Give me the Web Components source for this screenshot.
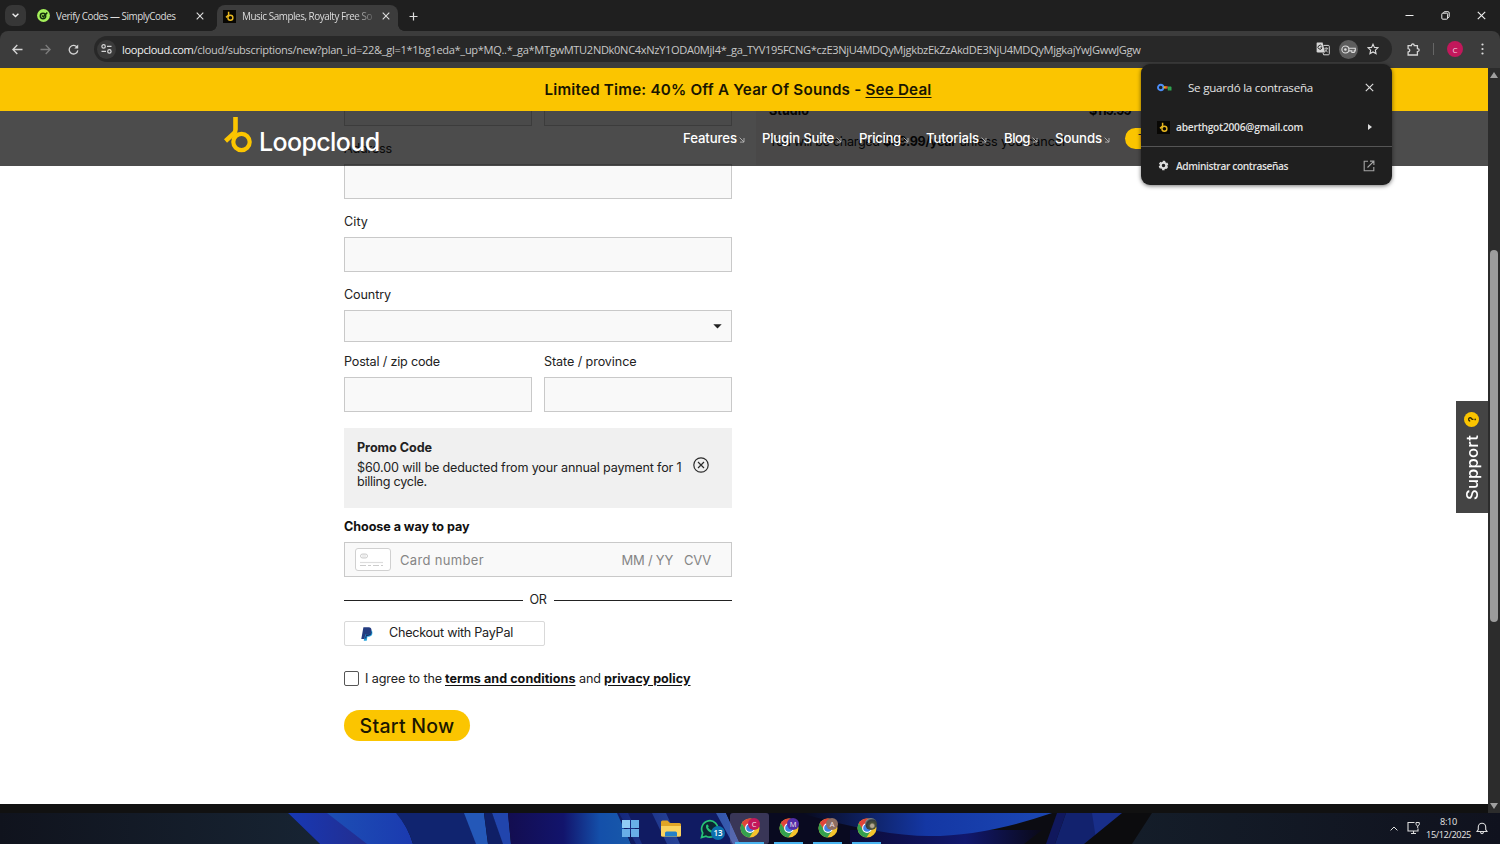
<!DOCTYPE html>
<html lang="en">
<head>
<meta charset="utf-8">
<title>Loopcloud checkout</title>
<style>
html,body{margin:0;width:1500px;height:844px;overflow:hidden;background:#111}
</style>
</head>
<body>
<desktop-screen></desktop-screen>
<script>
const define = (name, markup, css, init) => {
  customElements.define(name, class extends HTMLElement {
    connectedCallback() {
      if (this.shadowRoot) return;
      const root = this.attachShadow({mode: 'open'});
      const t = document.createElement('template');
      t.innerHTML = `<style>*{box-sizing:border-box}svg{display:block;flex:none}${css}</style>` +
        (typeof markup === 'function' ? markup(this) : markup);
      root.append(t.content.cloneNode(true));
      if (init) init(this, root);
    }
  });
};

/* One-line text; "w" tracks the line out to the given width. */
define('ui-text', '<slot></slot>', ':host{display:inline-block;white-space:nowrap;flex:none}', el => {
  const w = +el.getAttribute('w');
  if (!w) return;
  const n = el.textContent.length;
  el.style.letterSpacing = (w - el.getBoundingClientRect().width) / n + 'px';
});

const icon = (w, h, vb, body) => `<svg width="${w}" height="${h}" viewBox="${vb}" fill="none">${body}</svg>`;
const cross = (s, c, sw) => icon(s, s, '0 0 8 8', `<path d="M.7.7l6.6 6.6M7.3.7L.7 7.3" stroke="${c}" stroke-width="${sw}"/>`);
const loopMark = (w, h, c) => icon(w, h, '0 0 28 36', `<circle cx="17.5" cy="25" r="8.2" stroke="${c}" stroke-width="4.2"/><path d="M11.5 0V12.5Q11.5 15 9.5 16.8L1.5 24" stroke="${c}" stroke-width="4.6"/>`);
const loopFav = icon(13, 13, '0 0 13 13', '<rect width="13" height="13" fill="#080704"/><circle cx="7.4" cy="7.8" r="2.5" stroke="#e8b820" stroke-width="1.4"/><path d="M5.6 1.7V5L3 7.4" stroke="#e8b820" stroke-width="1.5"/>');

/* ---------- browser chrome ---------- */
define('browser-tab', el => `<slot name="icon"></slot><div class="t"><slot></slot></div>${cross(8, '#dedede', 1.1)}`, `
:host{display:flex;align-items:center;height:27px;padding:0 11px 0 7px;width:181px;color:#dcdcdc;position:relative}
.t{flex:1;margin-left:6px;overflow:hidden;display:flex}
:host([active]) .t{-webkit-mask:linear-gradient(90deg,#000 112px,transparent 136px);mask:linear-gradient(90deg,#000 112px,transparent 136px)}
:host([active]){background:#3c3c3c;border-radius:8px 8px 0 0}
:host([active])::before,:host([active])::after{content:"";position:absolute;bottom:0;width:6px;height:6px}
:host([active])::before{left:-6px;background:radial-gradient(circle at 0 0,transparent 5.5px,#3c3c3c 6px)}
:host([active])::after{right:-6px;background:radial-gradient(circle at 100% 0,transparent 5.5px,#3c3c3c 6px)}
`);

define('tab-strip', `
<div class="menu">${icon(7, 5, '0 0 7 5', '<path d="M.6.8L3.5 3.6 6.4.8" stroke="#eee" stroke-width="1.4"/>')}</div>
<browser-tab class="a"><svg slot="icon" width="13" height="13" viewBox="0 0 13 13" fill="none"><circle cx="6.5" cy="6.5" r="6.4" fill="#a5f15b"/><circle cx="6" cy="7" r="2.7" stroke="#16310c" stroke-width="1.5"/><path d="M5 6.5l1.3 1.3 4-4.3" stroke="#16310c" stroke-width="1.5"/></svg><ui-text w="119.500">Verify Codes — SimplyCodes</ui-text></browser-tab>
<browser-tab class="b" active><span slot="icon">${loopFav}</span><ui-text w="130">Music Samples, Royalty Free So</ui-text></browser-tab>
<div class="plus">${icon(9, 9, '0 0 9 9', '<path d="M4.5.5v8M.5 4.5h8" stroke="#ddd" stroke-width="1.2"/>')}</div>
<div class="win">
${icon(9, 9, '0 0 9 9', '<path d="M.5 4.5h8" stroke="#eee"/>')}
${icon(9, 9, '0 0 9 9', '<rect x=".8" y="2.2" width="5.8" height="6" rx="1" stroke="#eee"/><path d="M2.7 2V1.6Q2.7.7 3.6.7H7Q8.2.7 8.2 1.9V5.6Q8.2 6.5 7 6.6" stroke="#eee"/>')}
${cross(9, '#eee', 1)}
</div>`, `
:host{display:flex;height:31px;background:#1f1f1f;padding:0 14px 0 5px;font:9.9px "Open Sans",sans-serif}
.menu{width:21px;height:21px;margin-top:5px;border-radius:7px;background:#373737;display:grid;place-items:center}
browser-tab.a{margin:2px 0 0 4px;padding-right:7px}
browser-tab.b{margin:5px 0 0 6px;height:26px;width:181px;padding:0 8px 4px 6px}
.plus{margin:12px 0 0 11px}
.win{margin:11px 0 0 auto;display:flex;gap:27px}
`);

define('tool-bar', `
${icon(11, 11, '0 0 11 11', '<path d="M10.5 5.5H1M5.3 1L.9 5.5l4.4 4.5" stroke="#d5d5d5" stroke-width="1.3"/>')}
<span class="fw">${icon(11, 11, '0 0 11 11', '<path d="M.5 5.5H10M5.7 1l4.4 4.5L5.7 10" stroke="#7c7c7c" stroke-width="1.3"/>')}</span>
<span class="rl">${icon(11, 11, '0 0 11 11', '<path d="M9.2 3.4A4.3 4.3 0 1 0 9.8 6.3" stroke="#d5d5d5" stroke-width="1.3"/><path d="M10.2.5v4H6.3z" fill="#d5d5d5"/>')}</span>
<div class="omni">
<div class="site">${icon(11, 10, '0 0 11 10', '<circle cx="2.6" cy="2.4" r="1.7" stroke="#d5d5d5" stroke-width="1.2"/><path d="M6 2.4h4.5M.5 7.4H5" stroke="#d5d5d5" stroke-width="1.3"/><circle cx="8.4" cy="7.4" r="1.7" stroke="#d5d5d5" stroke-width="1.2"/>')}</div>
<div class="url"><ui-text class="h" w="71.5">loopcloud.com</ui-text><ui-text w="947">/cloud/subscriptions/new?plan_id=22&amp;_gl=1*1bg1eda*_up*MQ..*_ga*MTgwMTU2NDk0NC4xNzY1ODA0MjI4*_ga_TYV195FCNG*czE3NjU4MDQyMjgkbzEkZzAkdDE3NjU4MDQyMjgkajYwJGwwJGgw</ui-text></div>
<div class="acts">
<svg width="14" height="14" viewBox="0 0 14 14" fill="none"><path d="M1 .6h5.6L9 10.5H1.8Q.6 10.5.6 9.3V1z" fill="#d5d5d5"/><path d="M7.5 3.4h4.8q1 0 1 1v7.4q0 1-1 1H7.6L7 10.8" stroke="#d5d5d5"/><path d="M5.8 4.2A2 2 0 1 0 6 5.8H4.4" stroke="#2a2a2a" stroke-width="1"/><path d="M8.3 6.3h3.8M10.2 5.2v1M11.3 6.5Q10.8 8.7 8.8 9.7M9 7.3Q9.8 9.2 11.7 10" stroke="#d5d5d5" stroke-width=".8"/></svg>
<div class="key">${icon(15, 9, '0 0 15 9', '<circle cx="4.4" cy="4.5" r="3.5" stroke="#ddd" stroke-width="1.1"/><circle cx="4.4" cy="4.5" r="1.3" fill="#ddd"/><path d="M8 3.2h6.3v2.7h-1.1v1.6h-2.3V5.9H8" stroke="#ddd" stroke-width="1.1"/>')}</div>
${icon(12, 12, '0 0 12 12', '<path d="M6 1.2l1.45 3.2 3.5.4-2.6 2.35.7 3.45L6 8.9l-3.05 1.7.7-3.45L1.05 4.8l3.5-.4z" stroke="#ddd" stroke-width="1.1"/>')}
</div></div>
<span class="ext">${icon(13, 13, '0 0 13 13', '<path d="M1.1 2.6H4.4Q4.4 1 5.8 1t1.5 1.6H10.4V5.6Q12.2 5.6 12.2 7.1T10.4 8.6V12H1.1V9Q2.8 8.8 2.8 7.3T1.1 5.7z" stroke="#d5d5d5" stroke-width="1.3"/>')}</span>
<span class="sep"></span><span class="av">C</span>
<span class="dots">${icon(3, 12, '0 0 3 12', '<circle cx="1.5" cy="1.5" r="1.1" fill="#ddd"/><circle cx="1.5" cy="6" r="1.1" fill="#ddd"/><circle cx="1.5" cy="10.5" r="1.1" fill="#ddd"/>')}</span>`, `
:host{display:flex;align-items:center;height:37px;background:#3c3c3c;border-radius:8px 8px 0 0;padding:0 16px 1px 12px;font:11.1px "Open Sans",sans-serif;color:#c7c7c7}
.fw{margin-left:17px}.rl{margin-left:17px}
.omni{display:flex;align-items:center;margin-left:15px;width:1298px;height:26px;border-radius:13px;background:#282828;padding-left:3px}
.site{width:19px;height:19px;border-radius:50%;background:#3a3a3a;display:grid;place-items:center}
.url{display:flex;margin-left:6px;width:1185px}.h{color:#f0f0f0}
.acts{display:flex;align-items:center;gap:9px;margin-left:auto;padding-right:13px}
.key{width:19px;height:19px;border-radius:50%;background:#5d5d5d;display:grid;place-items:center}
.ext{margin-left:15px}.sep{width:1px;height:12px;background:#666;margin-left:13px}
.av{width:16px;height:16px;border-radius:50%;background:#c2185b;color:#f5d6e2;font-size:8px;display:grid;place-items:center;margin-left:13px}
.dots{margin-left:auto}
`);

/* ---------- web page ---------- */
define('promo-banner', `<ui-text w="321">Limited Time: 40% Off A Year Of Sounds - </ui-text><ui-text class="u" w="66">See Deal</ui-text>`, `
:host{display:flex;justify-content:center;align-items:center;height:43px;background:#fbc500;color:#191500;font:600 15.2px Inter,sans-serif;padding-right:12px}
ui-text{white-space:pre}.u{text-decoration:underline;text-underline-offset:2px}
`);

define('nav-item', el => `<ui-text w="${el.getAttribute('w')}">${el.getAttribute('label')}</ui-text>${icon(6, 6, '0 0 6 6', '<path d="M.6.600l4.400 4.400M5 1v4.100H1" stroke="#b5b5b5" stroke-width=".9"/>')}`,
  ':host{display:flex;align-items:center;gap:2px}svg{margin-top:4px}');

define('site-nav', `
<div class="logo">${loopMark(28, 36, '#fbc500')}<ui-text w="120.5">Loopcloud</ui-text></div>
<nav><nav-item label="Features" w="54"></nav-item><nav-item label="Plugin Suite" w="72"></nav-item><nav-item label="Pricing" w="42"></nav-item><nav-item label="Tutorials" w="53"></nav-item><nav-item label="Blog" w="26"></nav-item><nav-item label="Sounds" w="47"></nav-item><span class="cta">Try free</span></nav>`, `
:host{display:flex;height:55px;background:rgba(0,0,0,.7);color:#fff}
.logo{display:flex;margin-left:224px;padding-top:6px;width:459px;font:500 25px Inter,sans-serif}
.logo ui-text{margin:10px 0 0 7px;line-height:30px}
nav{display:flex;gap:17px;align-items:center;height:54px;font:500 13.2px Inter,sans-serif}
.cta{margin-left:-2px;width:90px;height:21px;border-radius:11px;background:#fbc500;color:#222;font-size:11px;line-height:20px;padding-left:13px}
`);

define('form-field', el => `<label>${el.hasAttribute('label') ? `<ui-text w="${el.getAttribute('w')}">${el.getAttribute('label')}</ui-text>` : ''}</label><div class="box"><slot></slot></div>`, `
:host{display:block;flex:1}
label{display:block;height:23px;line-height:16px;font-size:12.6px;color:#222}
.box{height:35px;background:#f9f9f9;border:1px solid #c9c9c9;display:flex;align-items:center}
:host([select]) .box{height:32px;justify-content:flex-end;padding-right:9px}
`);

define('promo-box', `<div><b><ui-text w="75">Promo Code</ui-text></b><p><ui-text w="324.5">$60.00 will be deducted from your annual payment for 1</ui-text><br><ui-text w="70">billing cycle.</ui-text></p></div>
${icon(16, 16, '0 0 16 16', '<circle cx="8" cy="8" r="7.2" stroke="#2b2b2b" stroke-width="1.2"/><path d="M5 5l6 6M11 5l-6 6" stroke="#2b2b2b" stroke-width="1.2"/>')}`, `
:host{display:flex;height:80px;background:#f0f0f0;padding:11px 23px 0 13px;justify-content:space-between;margin-top:16px}
b{display:block;height:21.500px;line-height:18px;font-weight:650;font-size:12.6px}p{margin:0;line-height:14px;font-size:12.6px;color:#222}
svg{margin-top:18px}ui-text{vertical-align:top}
`);

define('card-field', `${icon(36, 24, '0 0 36 24', '<rect x=".5" y=".5" width="35" height="22" rx="2.5" fill="#fff" stroke="#d0d0d0"/><rect x="5.5" y="6" width="7" height="4" rx="2" stroke="#ccc"/><path d="M8 6v4M10 6v4" stroke="#ccc" stroke-width=".7"/><path d="M5 14.5h23" stroke="#ddd" stroke-width="1.2"/><path d="M5 17.5h23" stroke="#ccc" stroke-dasharray="6 2 3 2"/>')}
<ui-text class="n" w="84">Card number</ui-text><ui-text w="51.5">MM / YY</ui-text><ui-text class="v" w="27">CVV</ui-text>`, `
:host{display:flex;align-items:center;height:35px;background:#f9f9f9;border:1px solid #c9c9c9;padding:0 20px 0 10px;color:#858585;font:13px Inter,sans-serif}
.n{margin-left:9px;margin-right:auto}.v{margin-left:11px}
`);

define('pay-button', `${icon(12, 14, '0 0 12 14', '<path d="M4 3h6q2 1 1.3 4-.8 2.8-4 2.8H6.4L5.7 13.8H2.8z" fill="#27a3dc"/><path d="M2.4.3h5.2q3.3.2 2.8 3.6Q9.8 7.6 6 7.6H4.3L3.4 12H.3z" fill="#243c80"/><path d="M5 7.6h2q2.7-.2 3.4-3l.3 1Q10 8.8 7 8.9H5.7L5.2 11.5H4z" fill="#1a2d68"/>')}<ui-text w="124">Checkout with PayPal</ui-text>`, `
:host{display:flex;align-items:center;width:201px;height:25px;border:1px solid #d9d9d9;border-radius:2px;padding-left:16px;font:12.6px Inter,sans-serif;color:#222}
ui-text{margin-left:16px;margin-top:-2px}
`);

define('checkout-form', `
<div class="row r0"><form-field></form-field><form-field></form-field></div>
<form-field class="ad" label="Address" w="48"></form-field>
<form-field class="ci" label="City" w="24"></form-field>
<form-field class="co" label="Country" w="47" select>${icon(9, 5, '0 0 9 5', '<path d="M.3.2h8.4L4.5 4.6z" fill="#222"/>')}</form-field>
<div class="row r1"><form-field label="Postal / zip code" w="96"></form-field><form-field label="State / province" w="92.5"></form-field></div>
<promo-box></promo-box>
<h3><ui-text w="125.5">Choose a way to pay</ui-text></h3>
<card-field></card-field>
<div class="or"><i></i><ui-text w="17">OR</ui-text><i></i></div>
<pay-button></pay-button>
<div class="agree"><span class="cb"></span><ui-text class="a" w="77">I agree to the</ui-text><ui-text class="b" w="130.5">terms and conditions</ui-text><ui-text class="m" w="22">and</ui-text><ui-text class="b" w="86.5">privacy policy</ui-text></div>
<button><ui-text w="95">Start Now</ui-text></button>`, `
:host{display:block;width:388px;font:12.6px Inter,sans-serif;color:#222}
.row{display:flex;gap:12px}
.ad{margin-top:15px}.ci{margin-top:15px}.co{margin-top:15px}.ci,.ad{height:58px}.co{height:55px}
.r1{margin-top:12px}
h3{margin:10px 0 6px;height:18px;line-height:18px;font-size:12.6px;font-weight:650;color:#111}
.or{display:flex;align-items:center;justify-content:space-between;height:44px;gap:7px}
.or i{flex:1;height:1px;background:#222;margin-top:3px}
.agree{display:flex;align-items:center;margin-top:23px;height:18px}
.cb{width:15px;height:15px;border:1px solid #555;border-radius:2px;background:#fff}
.a{margin:0 3px 0 6px}.m{margin:0 3px 0 3.5px}.b{font-weight:650;color:#111;text-decoration:underline;text-underline-offset:2px}
button{display:flex;align-items:center;justify-content:center;width:126px;height:31px;margin-top:23px;border:0;padding:0;border-radius:16px;background:#fbc500;color:#1b1700;font:500 19.5px Inter,sans-serif}
`);

define('order-summary', `<div class="l"><b><ui-text w="40">Studio</ui-text></b><b><ui-text w="42">$119.99</ui-text></b></div>
<p><ui-text w="114">You will be charged&nbsp;</ui-text><b><ui-text w="73">$59.99/year</ui-text></b><ui-text w="109">&nbsp;unless you cancel</ui-text></p>`, `
:host{display:block;width:387px;height:73px;background:#f3f2f1;padding:10px 12px 0 13px;font:12.6px/18px Inter,sans-serif;color:#111}
.l{display:flex;justify-content:space-between}p{margin:13px 0 0;display:flex}b{font-weight:650}
`);

define('support-tab', `<ui-text w="65">Support</ui-text><span>?</span>`, `
:host{display:flex;align-items:center;writing-mode:vertical-rl;transform:rotate(180deg);width:32px;height:112px;background:#444;color:#fff;font:500 16.500px Inter,sans-serif;padding:13px 0 0;gap:8px}
span{width:15px;height:15px;border-radius:50%;background:#fbc500;color:#332a00;font:700 10px/15px Inter,sans-serif;text-align:center}
`, (el, root) => {
  const t = root.querySelector('ui-text');
  t.style.letterSpacing = '0px';
  t.style.letterSpacing = (65 - t.getBoundingClientRect().height) / 7 + 'px';
});

define('scroll-bar', `<i class="u"></i><i class="th"></i><i class="d"></i>`, `
:host{display:flex;flex-direction:column;align-items:center;width:12px;background:#2c2c2c;padding:4px 0 4px}
.u,.d{border:4px solid transparent;width:0;height:0}.u{border-top:0;border-bottom:6px solid #a0a0a0}.d{border-bottom:0;border-top:6px solid #a0a0a0;margin-top:auto}
.th{width:8px;height:372px;border-radius:4px;background:#9c9c9c;margin-top:172px}
`);

define('web-page', `
<div class="doc"><checkout-form></checkout-form><order-summary></order-summary></div>
<header><promo-banner></promo-banner><site-nav></site-nav></header>
<support-tab></support-tab>`, `
:host{display:block;position:relative;flex:1;height:736px;background:#fff;overflow:hidden}
.doc{display:flex;gap:24px;align-items:flex-start;padding-left:344px}
order-summary{margin-top:24px}
header{position:absolute;inset:0 0 auto 0}
support-tab{position:absolute;right:0;top:333px}
`);

define('password-bubble', `
<div class="hd">${icon(15, 9, '0 0 15 9', '<circle cx="3.7" cy="4.5" r="2.7" stroke="#4c8df6" stroke-width="1.9"/><path d="M6.6 4.3h3" stroke="#f2b90c" stroke-width="2.2"/><path d="M8.5 4.3h2.3" stroke="#e8453c" stroke-width="2.2"/><path d="M10.6 4.4h3.6M11.7 4v3.5M13.6 4v3.5" stroke="#2fa450" stroke-width="1.8"/>')}<ui-text w="125">Se guardó la contraseña</ui-text><span>${cross(9, '#ddd', 1)}</span></div>
<div class="it">${loopFav}<ui-text w="127">aberthgot2006@gmail.com</ui-text><span>${icon(4, 6, '0 0 4 6', '<path d="M0 0l4 3-4 3z" fill="#ddd"/>')}</span></div>
<div class="it mg">${icon(13, 13, '0 0 13 13', '<circle cx="6.5" cy="6.5" r="2.8" stroke="#ddd" stroke-width="2.1"/><circle cx="6.5" cy="6.5" r="4.1" stroke="#ddd" stroke-width="1.4" stroke-dasharray="2.5 1.79" transform="rotate(13 6.5 6.5)"/>')}<ui-text w="112">Administrar contraseñas</ui-text><span>${icon(12, 12, '0 0 12 12', '<path d="M5 1.2H1.2v9.6h9.6V7M7 1.1h3.9V5M10.7 1.3L4.5 7.5" stroke="#a5a5a5" stroke-width="1.1"/>')}</span></div>`, `
:host{display:block;width:251px;height:121px;background:#1f1f1f;border-radius:9px;color:#e3e3e3;font:600 10.2px "Open Sans",sans-serif;box-shadow:0 1px 4px rgba(0,0,0,.55);overflow:hidden}
.hd{display:flex;align-items:center;height:47px;padding:0 18px 0 16px;font-weight:400;font-size:11.6px}.hd ui-text{margin-left:16px}
span{margin-left:auto}
.it{display:flex;align-items:center;height:35px;padding:0 20px 3px 16px}.it ui-text{margin-left:6px}
.mg{border-top:1px solid #555;height:39px;padding:0 17px 1px 16px}
`);

/* ---------- taskbar ---------- */
define('chrome-icon', el => `${icon(20, 20, '0 0 20 20', `<circle cx="10" cy="10" r="9.5" fill="#f5c42c"/><path d="M1.8 5.2A9.5 9.5 0 0 1 18.2 5.2H10L6 12.4z" fill="#e0453a"/><path d="M1.8 5.2A9.5 9.5 0 0 0 9.4 19.5L14 12.4 6.2 12.2z" fill="#34a04e"/><circle cx="10" cy="10" r="4.9" fill="#fff"/><circle cx="10" cy="10" r="3.8" fill="#3d7fe8"/>`)}<span style="background:${el.getAttribute('c')}">${el.getAttribute('l') || ''}</span><u></u>`, `
:host{display:flex;justify-content:center;width:39px;height:31px;padding-top:5px;position:relative;border-radius:3px}
:host([active]){background:rgba(130,120,170,.4)}
span{position:absolute;left:18px;top:5px;width:12px;height:12px;border-radius:50%;color:#f3e5ee;font:7.5px/12px "Open Sans",sans-serif;text-align:center}
u{position:absolute;left:5px;right:5px;bottom:0;height:2px;background:#4ab3ee}
`);

define('task-bar', `
<svg class="bg" width="1500" height="31" viewBox="0 0 1500 31" preserveAspectRatio="none">
<defs><linearGradient id="a"><stop offset="0" stop-color="#10131d"/><stop offset="1" stop-color="#172433"/></linearGradient>
<linearGradient id="b"><stop offset="0" stop-color="#1738b4"/><stop offset="1" stop-color="#252c8a"/></linearGradient>
<linearGradient id="c"><stop offset="0" stop-color="#1c4fb4"/><stop offset="1" stop-color="#1b3ab0"/></linearGradient>
<linearGradient id="d"><stop offset="0" stop-color="#130d50"/><stop offset=".45" stop-color="#12146c"/><stop offset=".75" stop-color="#1450aa"/><stop offset="1" stop-color="#1859aa"/></linearGradient>
<linearGradient id="e"><stop offset="0" stop-color="#08091a"/><stop offset=".5" stop-color="#1437a4"/><stop offset="1" stop-color="#1b47b4"/></linearGradient>
<linearGradient id="f"><stop offset="0" stop-color="#141d29"/><stop offset="1" stop-color="#10121e"/></linearGradient>
<linearGradient id="g"><stop offset="0" stop-color="#0c0b37"/><stop offset=".6" stop-color="#11186e"/><stop offset="1" stop-color="#0a0918"/></linearGradient>
<linearGradient id="h"><stop offset="0" stop-color="#14277c"/><stop offset="1" stop-color="#3a60b4"/></linearGradient></defs>
<path fill="#0c0c12" d="M0 0h1500v31H0z"/><path fill="url(#a)" d="M0 0h288l32 31H0z"/>
<path fill="url(#b)" d="M288 0h60l30 31h-58z"/><path fill="url(#c)" d="M327 0h70Q408 14 413 31H367z"/>
<path fill="#10246f" d="M396 0h80l12 31h-75Q408 14 396 0z"/><path fill="#2458b8" d="M464 0h20l4 31h-12z"/><path fill="#0f1f66" d="M484 0h8l12 31h-16z"/><path fill="#2145ad" d="M492 0h16l3 31h-8z"/>
<path fill="url(#d)" d="M508 0h111l12 31H511z"/>
<path fill="#101b62" d="M617 0h102l18 31H631z"/><path d="M619 0h9l14 31h-6zM652 0h14l14 31h-13zM716 0h10l14 31h-7z" fill="url(#h)"/>
<path fill="#090a20" d="M726 0h150v31H740z"/><path fill="url(#g)" d="M850 17h192L1024 31H850z"/>
<path fill="url(#e)" d="M800 0h252Q985 23 930 23 880 23 800 0z"/>
<path fill="#10185d" d="M1057 0h9l-11 31h-9z"/><path fill="#12226e" d="M1066 0h64l-38 31h-37z"/><path fill="#1b3394" d="M1092 0h38l-34 26z" opacity=".7"/>
<path fill="#0c0c0e" d="M1122 0h38v31h-76z"/><path fill="url(#f)" d="M1152 0h348v31h-368z"/></svg>
<div class="apps">
<span>${icon(17, 17, '0 0 17 17', '<path d="M0 0h8v8H0zM9 0h8v8H9zM0 9h8v8H0zM9 9h8v8H9z" fill="#68aee8"/><path d="M0 0h8v8H0z" fill="#91ccf4"/>')}</span>
<span>${icon(20, 17, '0 0 20 17', '<path d="M0 2Q0 .5 1.5.5h5L9 3h9.5Q20 3 20 4.5V15q0 1.5-1.5 1.5h-17Q0 16.5 0 15z" fill="#e1a526"/><path d="M0 6h20v9q0 1.5-1.5 1.5h-17Q0 16.5 0 15z" fill="#fbd35f"/><path d="M4 16.5V13q0-1.5 1.5-1.5h9q1.5 0 1.5 1.5v3.5z" fill="#2580c8"/>')}</span>
<span class="wa">${icon(20, 20, '0 0 20 20', '<path d="M1.5 18.5l1.2-4.5A8.2 8.2 0 1 1 6 17.2z" fill="#0c2733" stroke="#27c477" stroke-width="1.7"/><path d="M6.8 5.6q1.3-.6 1.8 1.6.1.7-.6 1.4 1.3 2.2 3.5 3l1.2-1 2 1q.2 2-2.2 2.3Q7.2 13.2 6 8.3q-.2-1.9.8-2.7z" fill="#27c477"/>')}<em>13</em></span>
<chrome-icon active c="#c2185b" l="C"></chrome-icon><chrome-icon c="#512da8" l="M"></chrome-icon><chrome-icon c="#8d6e63" l="A"></chrome-icon><chrome-icon c="radial-gradient(circle at 60% 65%,#b4a893 15%,#4b5139 28%,#343b40 55%,#929894 75%)"></chrome-icon>
</div>
<div class="tray">
${icon(8, 5, '0 0 8 5', '<path d="M.6 4.4L4 1l3.4 3.4" stroke="#ddd"/>')}
${icon(13, 14, '0 0 13 14', '<path d="M7.5 1.5H1v8.5h10V7.5M4 12.5h5M6.5 10v2.5" stroke="#ddd" stroke-width="1.1"/><path d="M9 1.5h3.3v2.2L10.7 5 9 3.7zM10.7 5v2" stroke="#ddd"/>')}
<div class="clk"><ui-text w="17">8:10</ui-text><ui-text w="45">15/12/2025</ui-text></div>
${icon(12, 13, '0 0 12 13', '<path d="M1 9.5L2.3 7.5V5a3.7 3.7 0 0 1 7.4 0v2.5L11 9.5zM4.5 10q.2 1.6 1.5 1.6T7.5 10" stroke="#ddd" stroke-width="1.1"/>')}
</div>`, `
:host{display:flex;position:relative;height:31px;overflow:hidden}
.bg{position:absolute;inset:0}
.apps{display:flex;position:relative;margin-left:611px}
.apps>span{width:40px;height:31px;display:grid;place-items:center;position:relative;padding-right:1px}
.apps>span:nth-child(3){width:39px}
em{position:absolute;left:20px;top:13px;width:14px;height:14px;border-radius:50%;background:#0c70ae;color:#fff;font:600 8px/14px "Open Sans",sans-serif;text-align:center}
.tray{display:flex;align-items:center;position:relative;margin-left:auto;padding:0 12px 1px 0;color:#e6e6e6;font:9.2px/13px "Open Sans",sans-serif}
.tray svg:nth-child(2){margin-left:9px}
.clk{display:flex;flex-direction:column;align-items:center;margin:0 5px 0 6px}
`);

define('desktop-screen', `
<tab-strip></tab-strip>
<div class="tb"><tool-bar></tool-bar></div>
<main><web-page></web-page><scroll-bar></scroll-bar></main>
<div class="gap"></div>
<task-bar></task-bar>
<password-bubble></password-bubble>`, `
:host{display:flex;flex-direction:column;width:1500px;height:844px;position:relative;overflow:hidden;background:#111}
.tb{background:#1f1f1f}
main{display:flex;height:736px}scroll-bar{height:745px}
.gap{height:9px;background:#111;width:1488px}
password-bubble{position:absolute;left:1141px;top:64px}
`);
</script>
</body>
</html>
